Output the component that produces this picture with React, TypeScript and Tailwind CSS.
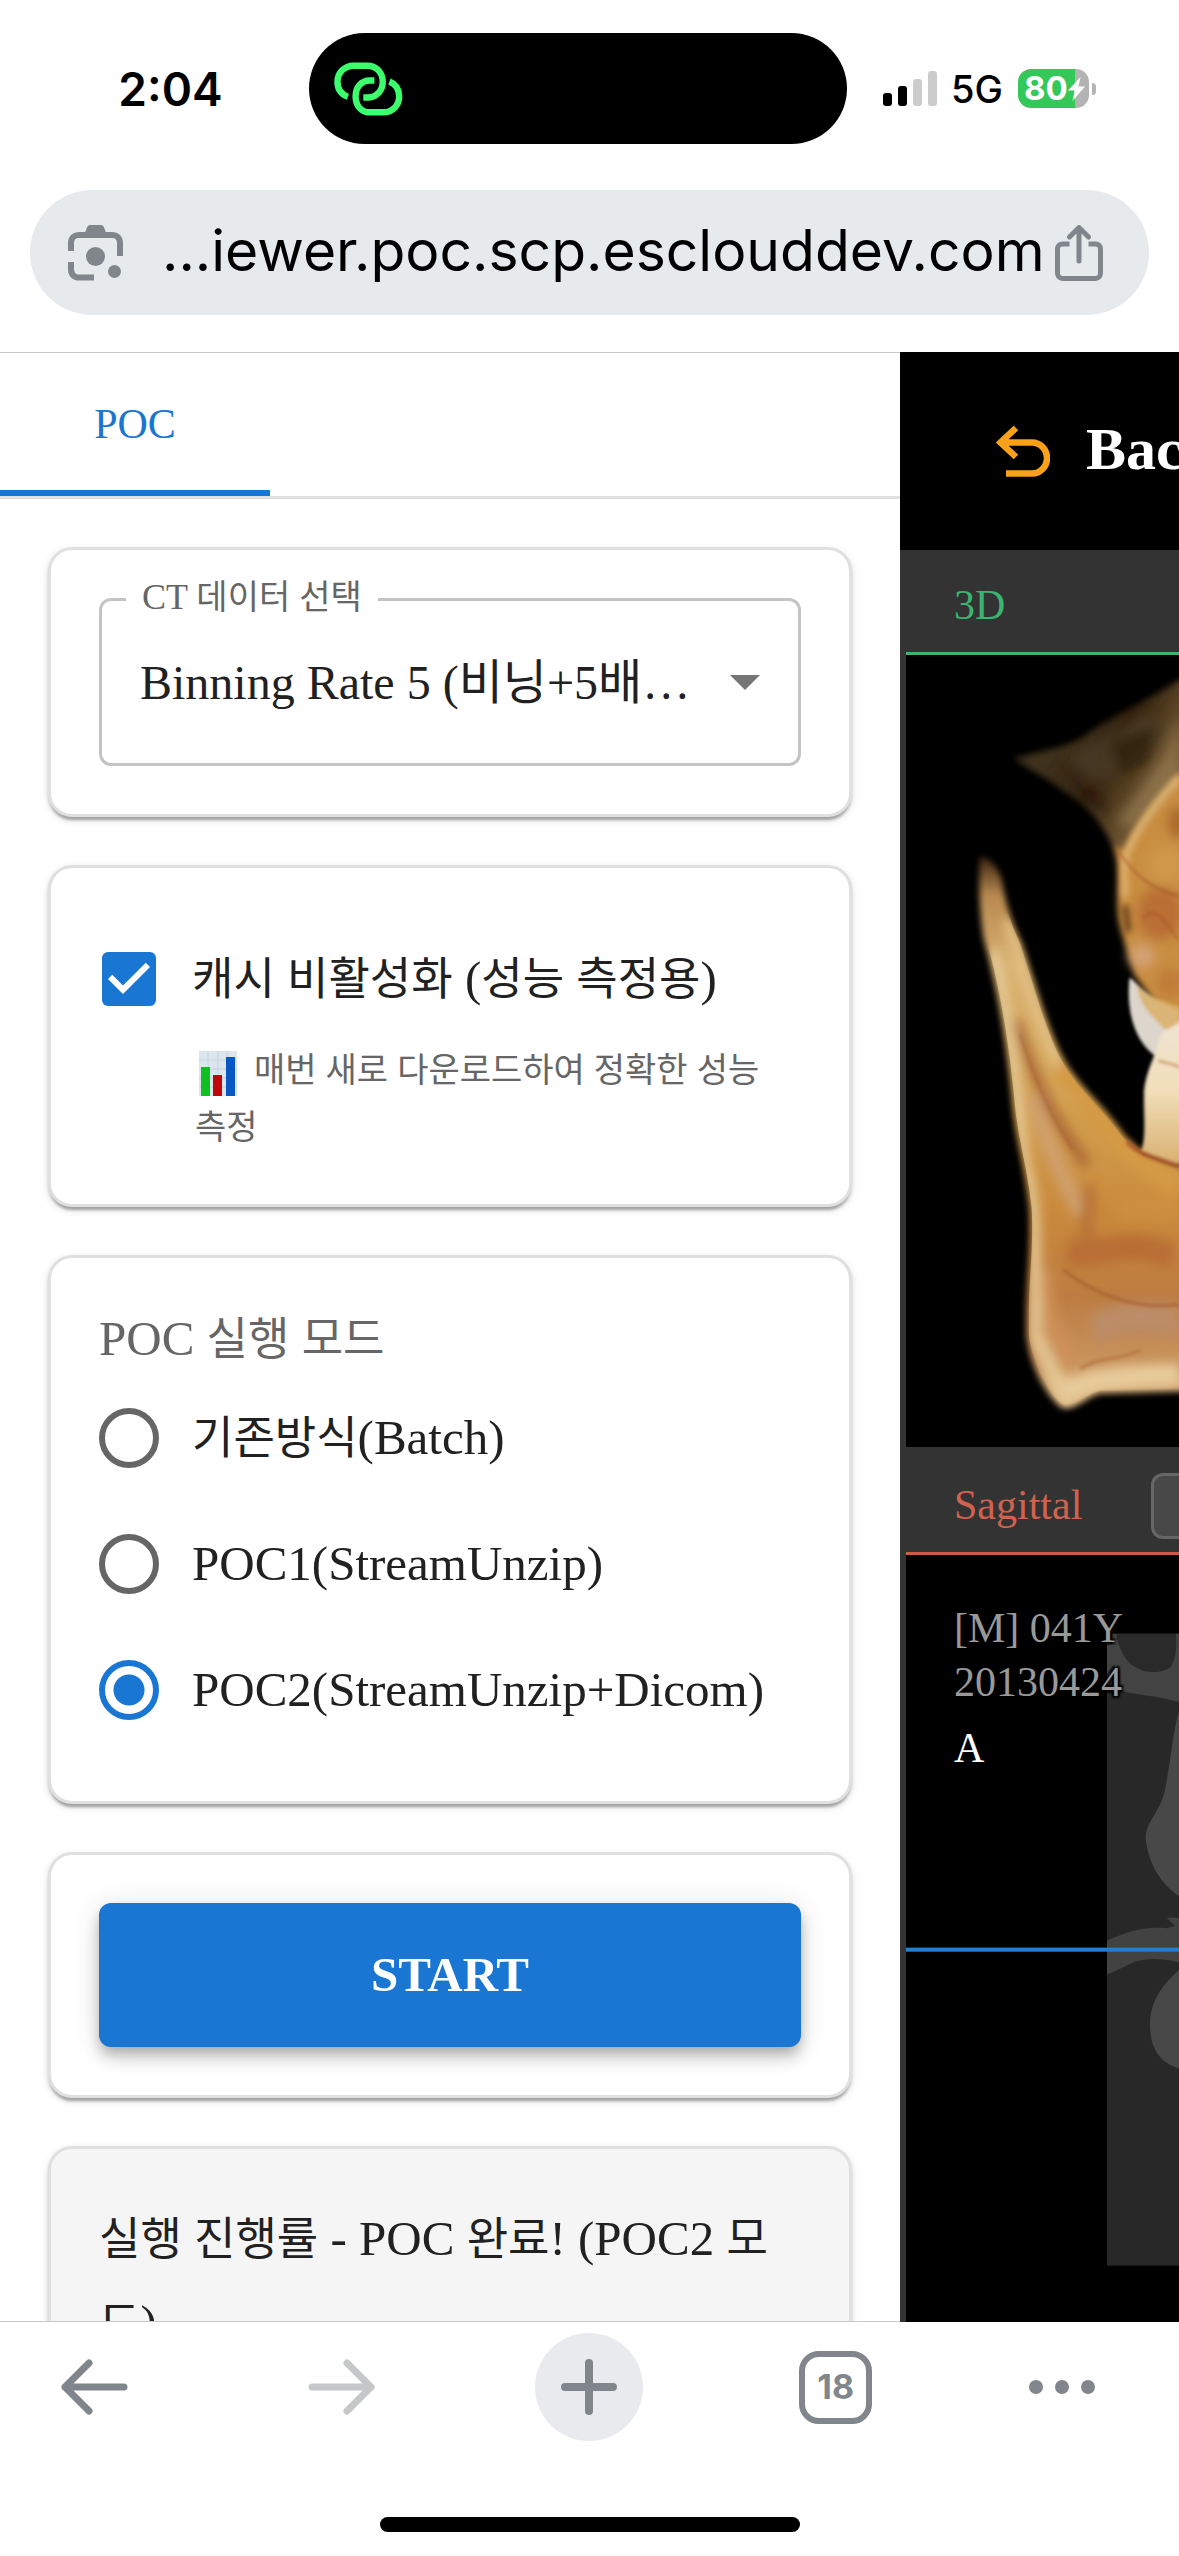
import type { ReactNode } from 'react';

const SANS = "font-['Inter','Liberation_Sans',sans-serif]";
const SERIF = "font-['Liberation_Serif','Noto_Sans_CJK_KR',serif]";

/** Sets runs of Hangul a little smaller than the Latin text round them. */
function Mixed({ text, size = 'body' }: { text: string; size?: 'body' | 'caption' }) {
  const hangul = size === 'body' ? 'text-[45px] leading-none' : 'text-[34px] leading-none';
  return (
    <>
      {text.split(/([가-힣]+)/).map((part, i) =>
        i % 2 === 1 ? (
          <span key={i} className={hangul}>
            {part}
          </span>
        ) : (
          part
        ),
      )}
    </>
  );
}

function LinkIcon() {
  return (
    <svg viewBox="102 125 205 161" className="h-[54px] w-[69px]" fill="none" stroke="#3cff6e" strokeWidth="19" aria-hidden="true">
      <path d="M143 229C122 221 112 205 112 184C112 157 133 136 160 136H202C228 136 247 157 247 184C247 211 228 231 202 231H189" />
      <path d="M267 183C286 191 296 207 296 227C296 254 276 275 249 275H207C182 275 166 254 166 227C166 200 184 180 208 180H222" />
    </svg>
  );
}

function Battery() {
  return (
    <div className="flex items-center gap-[3px]" role="img" aria-label="80% charging">
      <div className="relative flex h-[39px] w-[71px] items-center overflow-hidden rounded-[13px] bg-[linear-gradient(90deg,#34c759_80%,#b3b3b3_80%)] pl-[6px]">
        <span className="text-[33px] leading-none font-bold text-white">80</span>
        <svg viewBox="0 0 17 24" className="absolute top-[8px] right-[4px] h-[24px] w-[17px]" fill="#fff" aria-hidden="true">
          <path d="M12.500 0L0 13.500H6.500L4.500 24L17 9.500H10.500Z" />
        </svg>
      </div>
      <div className="h-[12px] w-[4px] rounded-r-full bg-[#b3b3b3]" />
    </div>
  );
}

function StatusBar() {
  return (
    <div className="grid h-[177px] grid-cols-[309fr_538fr_332fr] items-center">
      <div className="pl-8 text-center text-[46px] leading-none font-semibold">2:04</div>
      <div className="flex h-[111px] items-center rounded-full bg-black pl-[25px]">
        <LinkIcon />
      </div>
      <div className="flex items-center pl-9">
        <div className="flex h-[35px] items-end gap-[6px]" role="img" aria-label="Signal">
          <div className="h-[13px] w-[9px] rounded-[3px] bg-black" />
          <div className="h-[20px] w-[9px] rounded-[3px] bg-black" />
          <div className="h-[27px] w-[9px] rounded-[3px] bg-[#cccccc]" />
          <div className="h-[35px] w-[9px] rounded-[3px] bg-[#cccccc]" />
        </div>
        <span className="mr-[15px] ml-[14px] text-[38px] leading-none font-medium">5G</span>
        <Battery />
      </div>
    </div>
  );
}

function AddressBar() {
  return (
    <div className="mx-[30px] mt-[13px] mb-[37px] flex h-[125px] items-center rounded-full bg-[#e6eaed] pr-[46px] pl-[38px] text-[#80868b]">
      <button type="button" aria-label="Search with camera" className="shrink-0">
        <svg viewBox="0 0 56 56" className="size-[56px]" fill="none" stroke="currentColor" strokeWidth="6">
          <path d="M3 26V18C3 12.500 6.500 10 11 10H44C49 10 52 13 52 18V31" />
          <path d="M3 37V44C3 49.500 6 52.500 11 52.500H26" strokeLinecap="butt" />
          <path d="M16 10L19 2.500C19.500 1 20.500 0 22 0H33C34.500 0 35.500 1 36 2.500L39 10Z" fill="currentColor" stroke="none" />
          <circle cx="27.500" cy="31.500" r="9.500" fill="currentColor" stroke="none" />
          <circle cx="46.500" cy="46.500" r="6.500" fill="currentColor" stroke="none" />
        </svg>
      </button>
      <input
        type="text"
        readOnly
        aria-label="Address"
        value="...iewer.poc.scp.esclouddev.com"
        className="min-w-0 flex-1 bg-transparent pb-1 pl-[38px] text-[57px] leading-[76px] text-black outline-none"
      />
      <button type="button" aria-label="Share" className="shrink-0">
        <svg viewBox="0 0 48 56" className="h-[56px] w-[48px]" fill="none" stroke="currentColor" strokeWidth="5" strokeLinecap="round" strokeLinejoin="round">
          <path d="M14.500 19H7.500C4.500 19 2.500 21 2.500 24V48C2.500 51 4.500 53.500 7.500 53.500H40.500C43.500 53.500 45.500 51 45.500 48V24C45.500 21 43.500 19 40.500 19H33.500" strokeLinecap="butt" />
          <path d="M24 36V3M14.500 12L24 2.500L33.500 12" />
        </svg>
      </button>
    </div>
  );
}

function Card({ children, tone = 'bg-white' }: { children: ReactNode; tone?: string }) {
  return (
    <section
      className={`${tone} shrink-0 rounded-3xl border-[3px] border-[#e0e0e0] p-12 shadow-[0_6px_3px_-3px_rgba(0,0,0,0.2),0_3px_3px_rgba(0,0,0,0.14),0_3px_9px_rgba(0,0,0,0.12)]`}
    >
      {children}
    </section>
  );
}

function DataSelect() {
  return (
    <div className="relative flex h-[168px] items-center rounded-xl border-[3px] border-[#c4c4c4]">
      <label htmlFor="ct" className="absolute -top-8 left-6 bg-white px-4 text-[36px] leading-[56px] text-[#666666]">
        <Mixed text="CT 데이터 선택" size="caption" />
      </label>
      <select id="ct" className="h-full w-full appearance-none bg-transparent pr-24 pl-[38px] text-[48px] leading-[69px] outline-none">
        <option>Binning Rate 5 (비닝+5배…</option>
      </select>
      <svg viewBox="0 0 30 15" className="pointer-events-none absolute right-[38px] h-[15px] w-[30px]" fill="#757575" aria-hidden="true">
        <path d="M0 0H30L15 15Z" />
      </svg>
    </div>
  );
}

function ChartGlyph() {
  return (
    <svg viewBox="0 0 38 45" className="mr-2 ml-1 inline-block h-[45px] w-[38px] align-middle" role="img" aria-label="chart">
      <rect width="38" height="45" fill="#dce6ee" />
      <path d="M0 9H38M0 18H38M0 27H38M0 36H38M9 0V45M19 0V45M28 0V45" stroke="#c4d2de" strokeWidth="1" />
      <rect x="2" y="16" width="9" height="29" fill="#10c020" />
      <rect x="14" y="24" width="9" height="21" fill="#c00808" />
      <rect x="27" y="6" width="9" height="39" fill="#0858c4" />
    </svg>
  );
}

function CacheOption() {
  return (
    <>
      <label className="flex h-[126px] items-center gap-9 pl-[3px] text-[49px] leading-[72px]">
        <span className="relative size-[54px] shrink-0">
          <input type="checkbox" defaultChecked className="block size-[54px] appearance-none rounded-md bg-[#1976d2]" />
          <svg viewBox="3 3 18 18" className="pointer-events-none absolute inset-0" fill="#fff" aria-hidden="true">
            <path d="M10 17l-5-5 1.410-1.410L10 14.170l7.590-7.590L19 8l-9 9z" />
          </svg>
        </span>
        <span>
          <Mixed text="캐시 비활성화 (성능 측정용)" />
        </span>
      </label>
      <p className="pl-24 text-[36px] leading-[57px] break-keep text-[#666666]">
        <ChartGlyph /> <Mixed text="매번 새로 다운로드하여 정확한 성능 측정" size="caption" />
      </p>
    </>
  );
}

const MODES = ['기존방식(Batch)', 'POC1(StreamUnzip)', 'POC2(StreamUnzip+Dicom)'];

function ModeOptions() {
  return (
    <fieldset>
      <legend className="h-[69px] text-[49px] leading-[66px] text-[#666666]">
        <Mixed text="POC 실행 모드" />
      </legend>
      {MODES.map((mode, i) => (
        <label key={mode} className="flex h-[126px] items-center gap-[33px] text-[49px] leading-[72px]">
          <input
            type="radio"
            name="mode"
            defaultChecked={i === 2}
            className="size-[60px] shrink-0 appearance-none rounded-full border-[6px] border-[#666666] checked:border-[#1976d2] checked:bg-[radial-gradient(circle,#1976d2_15px,transparent_16px)]"
          />
          <span>
            <Mixed text={mode} />
          </span>
        </label>
      ))}
    </fieldset>
  );
}

function ControlPanel() {
  return (
    <div className="flex min-h-0 min-w-0 flex-col overflow-hidden border-y border-[#c8c8c8] bg-white text-[#212121]">
      <nav className="h-[146px] shrink-0 border-b-[3px] border-[#e0e0e0]">
        <button type="button" className="h-full w-[270px] border-b-[6px] border-[#1976d2] pt-1.5 text-[42px] text-[#1976d2]">
          POC
        </button>
      </nav>
      <div className="flex min-h-0 flex-1 flex-col gap-12 p-12">
        <Card>
          <DataSelect />
        </Card>
        <Card>
          <CacheOption />
        </Card>
        <Card>
          <ModeOptions />
        </Card>
        <Card>
          <button
            type="button"
            className="block h-[144px] w-full rounded-xl bg-[#1976d2] text-[49px] font-bold text-white shadow-[0_6px_12px_-3px_rgba(0,0,0,0.2),0_12px_15px_rgba(0,0,0,0.14),0_3px_30px_rgba(0,0,0,0.12)]"
          >
            START
          </button>
        </Card>
        <Card tone="bg-[#f5f5f5]">
          <p className="text-[49px] leading-[84px] break-all">
            <Mixed text="실행 진행률 - POC 완료! (POC2 모드)" />
          </p>
        </Card>
      </div>
    </div>
  );
}

function VolumeRender() {
  return (
    <svg viewBox="78 28 819 1478" preserveAspectRatio="none" className="block h-[792px] w-full bg-black" role="img" aria-label="3D volume">
      <defs>
        <linearGradient id="jaw" x1="0" y1="0" x2="0" y2="1">
          <stop offset="0" stopColor="#3c2412" />
          <stop offset="0.07" stopColor="#b98a50" />
          <stop offset="0.2" stopColor="#d9b272" />
          <stop offset="0.45" stopColor="#d2a050" />
          <stop offset="0.65" stopColor="#c98a3c" />
          <stop offset="0.8" stopColor="#bd7d42" />
          <stop offset="0.92" stopColor="#c99560" />
          <stop offset="1" stopColor="#e6c48e" />
        </linearGradient>
        <linearGradient id="wing" x1="0" y1="0" x2="1" y2="0.6">
          <stop offset="0" stopColor="#140c06" />
          <stop offset="0.3" stopColor="#40331f" />
          <stop offset="0.6" stopColor="#33230f" />
          <stop offset="1" stopColor="#8f7044" />
        </linearGradient>
        <linearGradient id="tooth" x1="0" y1="0" x2="0" y2="1">
          <stop offset="0" stopColor="#efe4d4" />
          <stop offset="0.5" stopColor="#f2dfba" />
          <stop offset="1" stopColor="#d9b070" />
        </linearGradient>
        <filter id="edge" x="-20%" y="-20%" width="140%" height="140%">
          <feGaussianBlur stdDeviation="10 6" />
        </filter>
        <filter id="soft" x="-50%" y="-50%" width="200%" height="200%">
          <feGaussianBlur stdDeviation="18 11" />
        </filter>
        <filter id="fine" x="-20%" y="-20%" width="140%" height="140%">
          <feGaussianBlur stdDeviation="5 3" />
        </filter>
        <clipPath id="jawClip">
          <path d="M300 425C320 425 345 425 358 450C370 485 386 520 421 567C456 635 496 725 541 780C586 835 656 865 731 930L790 962L920 987V1398L660 1401C620 1407 590 1430 550 1428C515 1415 457 1355 447 1300C442 1200 462 1150 455 1060C442 980 412 930 402 850C382 720 347 620 319 560C305 510 302 470 300 425Z" />
        </clipPath>
      </defs>

      <g filter="url(#edge)">
        <path d="M400 220C470 210 560 202 620 176C710 136 800 116 920 66V300L740 410L705 395C670 340 620 310 550 282C500 255 440 240 400 220Z" fill="url(#wing)" />
        <path d="M920 235C860 290 780 330 735 395L700 385C725 430 705 460 715 520C728 560 748 590 763 625L920 760Z" fill="#c98e42" />
        <path d="M300 405C320 405 345 415 364 445C375 485 390 520 425 565C460 630 500 720 545 775C590 830 660 860 735 925L790 958L920 985V1402L660 1406C620 1412 590 1436 550 1434C510 1420 450 1360 440 1300C435 1200 455 1150 448 1060C435 980 405 930 395 850C375 720 340 620 312 560C298 510 295 450 300 405Z" fill="url(#jaw)" />
      </g>

      <g filter="url(#soft)">
        <path d="M560 215L800 140L860 170L780 230L640 270Z" fill="#4c3e28" opacity="0.7" />
        <path d="M690 190L830 160L800 230L720 250Z" fill="#2a1a08" opacity="0.7" />
        <path d="M590 265L690 330L650 290Z" fill="#180c04" />
        <path d="M900 140L890 250L760 350L710 340L850 220Z" fill="#9c8358" opacity="0.6" />
        <ellipse cx="840" cy="510" rx="70" ry="50" fill="#b4622c" opacity="0.7" />
        <ellipse cx="860" cy="420" rx="60" ry="36" fill="#cf9748" />
        <ellipse cx="895" cy="340" rx="30" ry="30" fill="#a8692c" />
        <ellipse cx="785" cy="590" rx="40" ry="22" fill="#d6a884" opacity="0.8" />
        <ellipse cx="870" cy="640" rx="40" ry="26" fill="#bb7434" opacity="0.7" />
      </g>
      <g filter="url(#edge)" fill="none">
        <path d="M900 255C830 300 770 350 738 400C728 430 735 450 735 480" stroke="#e0b673" strokeWidth="18" />
        <path d="M735 495L745 545" stroke="#5a3412" strokeWidth="16" />
      </g>
      <path d="M715 395C760 430 790 460 897 478M790 520C830 490 870 540 897 560" fill="none" stroke="#a3522a" strokeWidth="6" opacity="0.5" filter="url(#fine)" />

      <g clipPath="url(#jawClip)">
        <g filter="url(#soft)" fill="none">
          <path d="M385 520C430 620 500 760 590 850" stroke="#e2bf84" strokeWidth="36" />
          <path d="M335 580C380 700 405 830 430 980C475 1060 460 1180 468 1300L560 1420" stroke="#e6cb98" strokeWidth="36" />
          <path d="M410 710C465 830 530 900 620 980" stroke="#a86434" strokeWidth="24" />
          <path d="M460 850C500 950 560 1010 600 1070" stroke="#d0a070" strokeWidth="40" />
          <path d="M540 790C640 880 720 960 900 1020" stroke="#d49a44" strokeWidth="50" />
          <path d="M620 1020C640 1060 600 1100 640 1140" stroke="#b87238" strokeWidth="40" />
          <path d="M560 1140C650 1160 720 1110 880 1150" stroke="#b96e34" strokeWidth="50" />
          <path d="M720 1060C780 1050 830 1060 900 1060" stroke="#cc8f40" strokeWidth="50" />
          <path d="M500 1180C490 1260 540 1320 580 1350" stroke="#cf9058" strokeWidth="40" />
          <path d="M640 1290C740 1250 820 1270 900 1270" stroke="#bc8c68" strokeWidth="60" />
          <path d="M560 1400C680 1370 780 1375 900 1370" stroke="#e8cc9c" strokeWidth="40" />
        </g>
        <g filter="url(#fine)" fill="none">
          <path d="M550 1175C640 1220 760 1250 897 1240" stroke="#a8602f" strokeWidth="7" opacity="0.7" />
          <path d="M600 1360C660 1335 720 1345 780 1325" stroke="#b06c3a" strokeWidth="7" opacity="0.6" />
          <path d="M420 735C470 830 520 900 580 950" stroke="#9c5a2c" strokeWidth="7" opacity="0.5" />
        </g>
      </g>

      <g filter="url(#fine)">
        <path d="M748 630C775 640 790 665 897 690V770L830 778C785 760 735 715 748 630Z" fill="#ddd6cc" />
        <path d="M770 640C800 670 850 670 920 690V730L850 725C820 700 780 690 770 640Z" fill="#d9ad62" opacity="0.8" />
        <path d="M840 740C860 720 890 725 920 700V980C880 975 830 965 782 955C800 930 790 890 792 840C800 800 825 780 840 740Z" fill="url(#tooth)" />
        <path d="M835 785C860 790 880 790 900 798" fill="none" stroke="#d09a60" strokeWidth="5" />
        <path d="M740 935C770 960 850 970 897 982" fill="none" stroke="#a8582a" strokeWidth="9" />
      </g>
    </svg>
  );
}

function SagittalSlice() {
  return (
    <svg viewBox="78 230 819 1307" preserveAspectRatio="none" className="absolute inset-0 size-full" role="img" aria-label="Sagittal slice">
      <defs>
        <filter id="ct" x="-10%" y="-10%" width="120%" height="120%">
          <feGaussianBlur stdDeviation="4 2" />
        </filter>
        <clipPath id="slice">
          <rect x="681" y="364" width="216" height="1077" />
        </clipPath>
      </defs>
      <rect x="681" y="364" width="216" height="1077" fill="#282828" />
      <g clipPath="url(#slice)">
        <g filter="url(#ct)">
          <path d="M670 350H920V485C850 470 770 470 670 455Z" fill="#434343" />
          <path d="M705 350H885C895 390 885 410 870 422C830 435 780 430 750 415C725 400 710 380 705 350Z" fill="#2a2a2a" />
          <path d="M920 470C880 500 880 560 855 630C840 670 795 685 797 715C810 770 860 800 920 820Z" fill="#484848" />
          <path d="M670 890C730 875 780 862 860 866L885 862L860 848H920V928C850 915 780 915 740 930L670 948Z" fill="#424242" />
          <path d="M920 925C870 950 810 980 810 1030C810 1090 870 1100 920 1110Z" fill="#474747" />
        </g>
      </g>
      <rect x="78" y="899" width="819" height="7" fill="#1f7fd0" />
    </svg>
  );
}

function ViewerPanel() {
  return (
    <div className="flex min-h-0 min-w-0 flex-col overflow-hidden bg-[#333333] text-[42px] whitespace-nowrap">
      <button type="button" className="flex h-[198px] shrink-0 items-center gap-9 bg-black pl-24 text-[60px] leading-none font-bold text-white">
        <svg viewBox="0 0 54 51" className="h-[51px] w-[54px] shrink-0" fill="none" stroke="#f9a11b" strokeWidth="6.500" aria-hidden="true">
          <path d="M20 2L4.500 16.500L20 31M5 16.500H36A14.500 15 0 0 1 36 47.500H10" />
        </svg>
        <span className="pb-1">Back</span>
      </button>
      <section className="flex shrink-0 flex-col pl-[6px]">
        <h2 className="flex h-[105px] items-center border-b-[3px] border-[#3cb371] pt-2 pl-12 text-[#3cb371]">3D</h2>
        <VolumeRender />
      </section>
      <section className="flex min-h-0 flex-1 flex-col pl-[6px]">
        <div className="flex h-[108px] shrink-0 items-center justify-between border-b-[3px] border-[#cd5c45] pt-3 pl-12">
          <h2 className="text-[#d1624f]">Sagittal</h2>
          <button type="button" aria-label="View options" className="h-[66px] w-7 rounded-l-xl border-[3px] border-r-0 border-[#666666] bg-[#484848]" />
        </div>
        <div className="relative min-h-0 flex-1 bg-black">
          <SagittalSlice />
          <div className="relative pt-[46px] pl-12 text-[#999999] [text-shadow:2px_2px_2px_#000,-2px_-2px_2px_#000,2px_-2px_2px_#000,-2px_2px_2px_#000]">
            <p className="leading-[54px]">[M] 041Y</p>
            <p className="leading-[54px]">20130424</p>
            <p className="mt-3 leading-[54px] text-white">A</p>
          </div>
        </div>
      </section>
    </div>
  );
}

function Toolbar() {
  return (
    <footer className="flex h-[234px] shrink-0 flex-col items-center justify-between pt-[11px] pb-6">
      <div className="flex w-full items-center justify-between pr-[84px] pl-10 text-[#80868b]">
        <button type="button" aria-label="Back" className="flex size-[108px] items-center justify-center">
          <svg viewBox="0 0 67 56" className="h-[56px] w-[67px]" fill="none" stroke="currentColor" strokeWidth="7" strokeLinecap="round" strokeLinejoin="round">
            <path d="M63 28H4M28 4L4 28L28 52" />
          </svg>
        </button>
        <button type="button" aria-label="Forward" className="flex size-[108px] items-center justify-center text-[#c6c7c8]">
          <svg viewBox="0 0 67 56" className="h-[56px] w-[67px]" fill="none" stroke="currentColor" strokeWidth="7" strokeLinecap="round" strokeLinejoin="round">
            <path d="M4 28H63M39 4L63 28L39 52" />
          </svg>
        </button>
        <button type="button" aria-label="New tab" className="flex size-[108px] items-center justify-center rounded-full bg-[#e8eaed]">
          <svg viewBox="0 0 56 56" className="size-[56px]" fill="none" stroke="currentColor" strokeWidth="8" strokeLinecap="round">
            <path d="M28 4V52M4 28H52" />
          </svg>
        </button>
        <button type="button" aria-label="Tabs" className="flex size-[108px] items-center justify-center">
          <span className="flex size-[73px] items-center justify-center rounded-[20px] border-[6px] border-[#80868b] text-[34px] leading-none font-bold">18</span>
        </button>
        <button type="button" aria-label="More" className="flex h-[108px] items-center gap-3">
          <span className="size-[14px] rounded-full bg-[#80868b]" />
          <span className="size-[14px] rounded-full bg-[#80868b]" />
          <span className="size-[14px] rounded-full bg-[#80868b]" />
        </button>
      </div>
      <div className="h-[15px] w-[420px] rounded-full bg-black" />
    </footer>
  );
}

export default function App() {
  return (
    <div className={`flex h-screen flex-col overflow-hidden bg-white text-black ${SANS}`}>
      <header className="shrink-0">
        <StatusBar />
        <AddressBar />
      </header>
      <main className={`grid min-h-0 flex-1 grid-cols-[900fr_279fr] grid-rows-[minmax(0,1fr)] ${SERIF}`}>
        <ControlPanel />
        <ViewerPanel />
      </main>
      <Toolbar />
    </div>
  );
}
